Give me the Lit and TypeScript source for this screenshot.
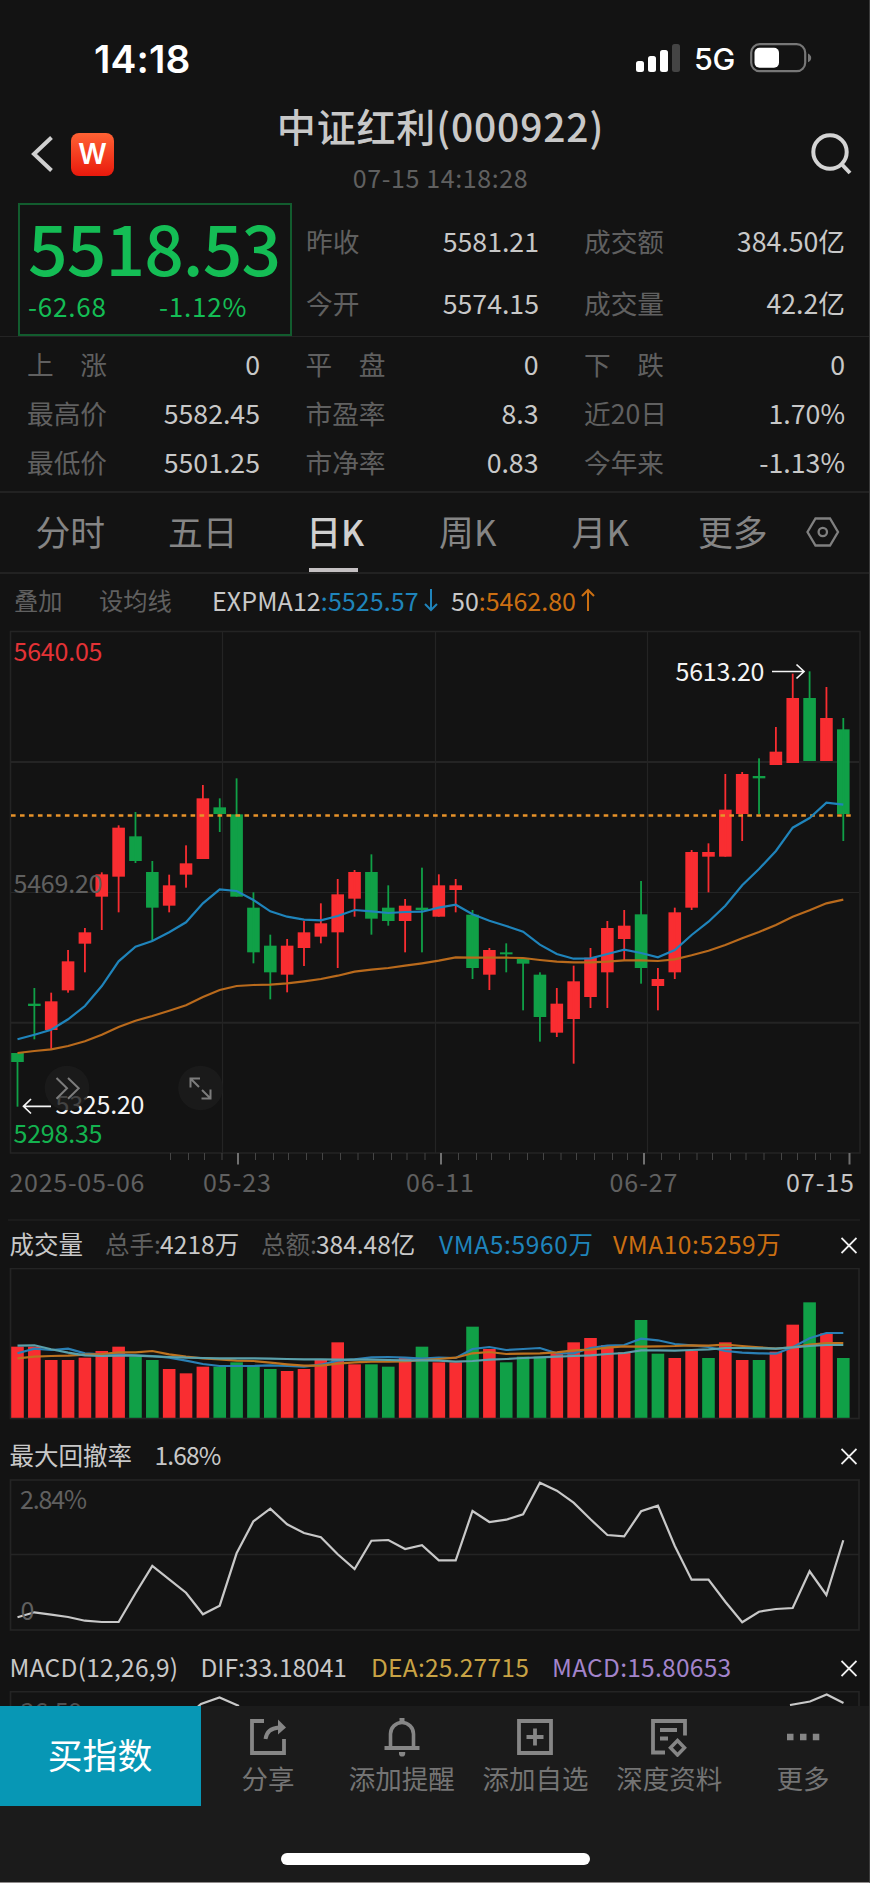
import { LitElement, html, svg, css } from "lit";
import { customElement, property } from "lit/decorators.js";

type Candle = [number, number, number, number, number];

// [body top, body bottom, wick top, wick bottom, rising] in thirds of a pixel below the plot origin
const CANDLES: Candle[] = [
  [1299, 1326, 1299, 1460, 0], [1151, 1158, 1104, 1258, 0], [1144, 1230, 1118, 1287, 1],
  [1024, 1111, 990, 1118, 1], [937, 971, 924, 1057, 1], [763, 830, 757, 930, 1],
  [623, 770, 616, 877, 1], [649, 723, 576, 729, 0], [756, 863, 723, 963, 0],
  [796, 857, 764, 877, 1], [730, 764, 676, 803, 1], [535, 717, 495, 717, 1],
  [562, 582, 535, 636, 0], [583, 830, 475, 830, 0], [863, 997, 817, 1030, 0],
  [977, 1057, 944, 1138, 0], [977, 1064, 957, 1117, 1], [937, 984, 903, 1038, 1],
  [910, 950, 850, 970, 1], [823, 937, 777, 1044, 1], [756, 836, 750, 890, 1],
  [756, 896, 703, 944, 0], [863, 903, 796, 917, 0], [857, 903, 837, 997, 1],
  [863, 870, 743, 997, 0], [796, 890, 763, 890, 1], [796, 810, 777, 877, 1],
  [884, 1044, 870, 1077, 0], [990, 1064, 984, 1110, 1], [997, 1003, 970, 1057, 0],
  [1017, 1031, 1017, 1171, 0], [1064, 1191, 1057, 1265, 0], [1151, 1238, 1104, 1251, 1],
  [1084, 1197, 1037, 1331, 1], [1013, 1131, 984, 1164, 1], [924, 1057, 903, 1164, 1],
  [917, 957, 870, 1020, 1], [883, 1044, 783, 1091, 0], [1077, 1098, 1044, 1171, 1],
  [877, 1057, 863, 1077, 1], [696, 863, 690, 870, 1], [696, 710, 670, 817, 1],
  [569, 710, 462, 710, 1], [462, 582, 456, 663, 1], [468, 475, 415, 582, 0],
  [395, 435, 321, 435, 1], [234, 429, 161, 429, 1], [234, 423, 154, 423, 0],
  [294, 423, 201, 423, 1], [328, 582, 294, 663, 0],
];
const EMA12 = [1258, 1244, 1229, 1198, 1158, 1098, 1024, 980, 963, 937, 907, 850, 808, 813, 840, 874, 890, 899, 901, 888, 870, 874, 879, 876, 875, 863, 854, 883, 902, 918, 935, 974, 1002, 1016, 1015, 1002, 989, 999, 1012, 990, 945, 905, 857, 796, 747, 693, 623, 594, 548, 554];
const EMA50 = [1299, 1293, 1288, 1278, 1264, 1244, 1221, 1202, 1188, 1172, 1156, 1131, 1110, 1098, 1095, 1094, 1090, 1084, 1077, 1067, 1055, 1049, 1044, 1037, 1030, 1022, 1012, 1013, 1013, 1013, 1014, 1020, 1025, 1027, 1027, 1025, 1021, 1021, 1023, 1018, 1006, 992, 975, 955, 936, 915, 890, 871, 850, 839];
const VOLUME = [410, 410, 450, 450, 443, 423, 410, 440, 450, 477, 490, 470, 470, 457, 467, 477, 483, 477, 450, 397, 463, 463, 470, 443, 410, 457, 457, 350, 417, 457, 440, 440, 430, 397, 384, 405, 427, 330, 431, 444, 423, 444, 397, 450, 450, 425, 344, 277, 370, 444];
const VOLUME_DOWN = new Set([7, 8, 12, 13, 14, 15, 21, 22, 24, 27, 29, 30, 31, 37, 38, 41, 44, 47, 49]);
const VMA5 = [430, 416, 420, 416, 430, 433, 433, 436, 438, 443, 452, 462, 468, 468, 468, 466, 468, 470, 464, 452, 448, 442, 441, 443, 446, 443, 444, 417, 411, 420, 417, 414, 430, 430, 414, 407, 405, 386, 391, 402, 406, 411, 423, 428, 430, 431, 412, 385, 369, 369];
const VMA10 = [445, 440, 438, 437, 434, 432, 427, 427, 423, 433, 440, 445, 448, 452, 453, 458, 463, 467, 467, 461, 457, 455, 455, 454, 450, 447, 443, 430, 426, 432, 431, 430, 427, 421, 419, 413, 409, 410, 409, 408, 406, 407, 404, 408, 412, 416, 412, 404, 399, 399];
const VMA20 = [407, 406, 418, 428, 436, 438, 437, 437, 439, 441, 443, 444, 445, 445, 445, 446, 447, 448, 448, 449, 449, 449, 450, 451, 451, 452, 455, 453, 449, 447, 444, 442, 440, 438, 436, 432, 429, 421, 421, 422, 420, 418, 414, 414, 415, 416, 412, 408, 405, 405];
const DRAWDOWN = [562, 547, 554, 561, 572, 576, 576, 490, 408, 448, 488, 553, 527, 370, 274, 236, 283, 309, 322, 373, 417, 332, 330, 357, 346, 391, 391, 243, 276, 269, 253, 158, 182, 218, 268, 315, 319, 244, 227, 348, 449, 449, 515, 577, 545, 537, 534, 424, 495, 331];
const TICKS = [170.5, 188.5, 204.5, 222, 255.5, 273.5, 288.5, 306.5, 322.5, 340.5, 358, 373.5, 391.5, 407, 425, 458.5, 476.5, 491.5, 509.5, 527.5, 543.5, 561, 576.5, 594.5, 612.5, 627.5, 661.5, 679.5, 697, 712.5, 730.5, 746, 764, 781.5, 797.5, 815.5, 830.5];
const BIG_TICKS = [238, 441, 644, 849.5];

const RED = "#f92d31";
const GREEN = "#10a047";
const GRID = "#242424";
const at = (i: number) => 17.5 + i * 16.853;
const line = (values: number[], top: number) =>
  values.map((v, i) => `${at(i).toFixed(1)},${(top + v / 3).toFixed(1)}`).join(" ");

const FONT = css`
  :host {
    display: block;
    font-family: "Noto Sans CJK SC", "Noto Sans", sans-serif;
  }
  svg { display: block; }
  text { font-family: "Noto Sans CJK SC", "Noto Sans", sans-serif; font-size: 25px; }
`;

@customElement("status-bar")
class StatusBar extends LitElement {
  static styles = [FONT, css`
    .bar { height: 100px; padding: 16px 57px 0 94px; box-sizing: border-box; display: flex; align-items: center; color: #fff; font-family: Inter, sans-serif; }
    .time { font-size: 38.800px; font-weight: 600; letter-spacing: 0.1px; flex: 1; }
    .net { font-size: 30.500px; font-weight: 500; width: 43px; margin: 0 13px 0 13px; letter-spacing: -0.3px; }
  `];
  render() {
    return html`<div class="bar">
      <span class="time">14:18</span>
      <svg width="45" height="28" viewBox="0 0 45 28" fill="#fff">
        <rect x="0" y="17" width="8" height="11" rx="2.5" /><rect x="12" y="12" width="8" height="16" rx="2.5" />
        <rect x="24" y="6" width="8" height="22" rx="2.5" /><rect x="36" y="0" width="8" height="28" rx="2.5" fill="#444" />
      </svg>
      <span class="net">5G</span>
      <svg width="62" height="30" viewBox="0 0 62 30">
        <rect x="1.2" y="1.2" width="54" height="27" rx="8.5" fill="none" stroke="#777" stroke-width="2.2" />
        <rect x="4.5" y="4.8" width="24.5" height="20" rx="5" fill="#fff" />
        <path d="M58 10.500c2 1 3.200 2.600 3.200 4.400s-1.200 3.400-3.200 4.400z" fill="#777" />
      </svg>
    </div>`;
  }
}

@customElement("page-header")
class PageHeader extends LitElement {
  static styles = [FONT, css`
    .head { height: 103px; display: grid; grid-template-columns: 124px 1fr 112px; align-items: center; }
    .left { display: flex; align-items: center; gap: 16px; padding: 5px 0 0 31px; }
    .logo { width: 43px; height: 43px; border-radius: 8px; background: linear-gradient(#ff6234, #e9190c); display: flex; align-items: center; justify-content: center; color: #fff; font: 600 28px/1 Inter, sans-serif; }
    .center { text-align: center; padding-bottom: 11px; white-space: nowrap; }
    .title { font-size: 39px; line-height: 48px; font-weight: 500; color: #c8c8c8; letter-spacing: 0.85px; }
    .date { font-size: 25px; line-height: 30px; margin-top: 13px; color: #606060; letter-spacing: 0.6px; }
    .right { padding: 5px 0 0 52px; }
  `];
  render() {
    return html`<div class="head">
      <div class="left">
        <svg width="24" height="38" viewBox="0 0 24 38"><path d="M20.500 2.500L3 19l17.500 16.500" fill="none" stroke="#d0d0d0" stroke-width="4" /></svg>
        <div class="logo">W</div>
      </div>
      <div class="center"><div class="title">中证红利(000922)</div><div class="date">07-15 14:18:28</div></div>
      <div class="right"><svg width="44" height="44" viewBox="0 0 44 44" fill="none" stroke="#d4d4d4" stroke-width="4"><circle cx="21" cy="20" r="16.700" /><path d="M32.500 32l8.500 9" /></svg></div>
    </div>`;
  }
}

@customElement("quote-panel")
class QuotePanel extends LitElement {
  static styles = [FONT, css`
    .top { height: 134px; box-sizing: border-box; display: grid; grid-template-columns: 292px 1fr; border-bottom: 1px solid #242424; }
    .box { margin-left: 18px; border: 2px solid #125c2e; box-sizing: border-box; color: #14bd55; height: 133px; }
    .price { font-size: 69.500px; line-height: 70px; font-weight: 500; padding: 6px 0 0 8px; letter-spacing: -0.9px; white-space: nowrap; }
    .delta { display: flex; font-size: 26px; line-height: 30px; padding: 10px 0 0 8px; letter-spacing: 0.8px; }
    .delta span { width: 141px; white-space: nowrap; }
    .cells { display: grid; grid-template-columns: 233px 261px; column-gap: 45px; padding-left: 14px; }
    .upper { padding-top: 7px; grid-auto-rows: 62px; }
    .lower { grid-template-columns: 233px 233px 261px; column-gap: 45.500px; padding: 2px 0 5px 27px; grid-auto-rows: 49px; border-bottom: 2px solid #222; }
    .cell { display: flex; justify-content: space-between; align-items: center; font-size: 26.700px; line-height: 30px; white-space: pre; }
    .name { color: #606060; }
    .value { color: #c8c8c8; }
  `];
  cell = ([name, value]: string[]) => html`<div class="cell"><span class="name">${name}</span><span class="value">${value}</span></div>`;
  render() {
    return html`
      <div class="top">
        <div class="box"><div class="price">5518.53</div><div class="delta"><span>-62.68</span><span>-1.12%</span></div></div>
        <div class="cells upper">
          ${[["昨收", "5581.21"], ["成交额", "384.50亿"], ["今开", "5574.15"], ["成交量", "42.2亿"]].map(this.cell)}
        </div>
      </div>
      <div class="cells lower">
        ${[["上　涨", "0"], ["平　盘", "0"], ["下　跌", "0"], ["最高价", "5582.45"], ["市盈率", "8.3"], ["近20日", "1.70%"], ["最低价", "5501.25"], ["市净率", "0.83"], ["今年来", "-1.13%"]].map(this.cell)}
      </div>`;
  }
}

@customElement("period-tabs")
class PeriodTabs extends LitElement {
  static styles = [FONT, css`
    .tabs { height: 79px; display: flex; padding-left: 4px; border-bottom: 2px solid #222; }
    .tab { width: 132.500px; display: flex; flex-direction: column; align-items: center; justify-content: space-between; font-size: 34.800px; line-height: 77px; color: #858585; height: 79px; }
    .active { color: #d0d0d0; font-weight: 500; }
    .mark { width: 49px; height: 4px; background: #c4c0c2; margin: -3px 3px 0 0; }
    .gear { padding: 23px 0 0 7px; }
  `];
  render() {
    return html`<div class="tabs">
      ${["分时", "五日", "日K", "周K", "月K", "更多"].map((t) =>
        t === "日K" ? html`<div class="tab active">${t}<div class="mark"></div></div>` : html`<div class="tab">${t}</div>`)}
      <svg class="gear" width="34" height="32" viewBox="0 0 34 32" fill="none" stroke="#808080" stroke-width="2.300"><path d="M9.500 2.500h14.500l8 13.500l-8 13.500h-14.500l-8-13.500z" /><circle cx="16.800" cy="16" r="4.200" /></svg>
    </div>`;
  }
}

@customElement("overlay-row")
class OverlayRow extends LitElement {
  static styles = [FONT, css`
    .row { height: 56px; box-sizing: border-box; display: flex; align-items: center; padding: 0 0 5px 14px; font-size: 25px; line-height: 30px; color: #606060; white-space: nowrap; }
    .add { width: 85px; font-size: 24.300px; }
    .set { width: 113px; font-size: 24.300px; }
    .white { color: #c8c8c8; }
    .ema { width: 211px; letter-spacing: 0.100px; }
    .blue { color: #1f84bb; }
    .orange { color: #cb6f12; }
    .up { margin-left: 4px; }
    .arrow { margin-right: 12px; }
  `];
  render() {
    return html`<div class="row">
      <span class="add">叠加</span><span class="set">设均线</span>
      <span class="white ema">EXPMA12<span class="blue">:5525.57</span></span>
      <svg class="arrow" width="16" height="24" viewBox="0 0 16 24" fill="none" stroke="#1f84bb" stroke-width="2"><path d="M8 1v21M2 16l6 6 6-6" /></svg>
      <span class="white">50<span class="orange">:5462.80</span></span>
      <svg class="up" width="16" height="24" viewBox="0 0 16 24" fill="none" stroke="#cb6f12" stroke-width="2"><path d="M8 23V2M2 8l6-6 6 6" /></svg>
    </div>`;
  }
}

@customElement("candle-chart")
class CandleChart extends LitElement {
  static styles = [FONT, css`
    .tip { fill: #f4f4f4; }
    .high { fill: #e43236; }
    .low { fill: #14b24f; }
    .dim { fill: #606060; }
    .last { fill: #c6c6c6; }
  `];
  render() {
    const label = (x: number, y: number, w: number, cls: string, t: string) =>
      svg`<text class=${cls} x=${x} y=${y} textLength=${w}>${t}</text>`;
    return html`<svg width="869" height="591" viewBox="0 630 869 591">
      <g stroke=${GRID} fill="none">
        <rect x="10.500" y="631.500" width="849.500" height="521.500" stroke-width="1.500" />
        <path d="M11 762H859M11 1022.700H859" stroke-width="2" />
        <path d="M11 892.500H859M222.500 632V1153M435.500 632V1153M647.500 632V1153" stroke-width="1.200" />
        <path d="M8 1220H860" stroke-width="1" />
      </g>
      <path d=${TICKS.map((x) => `M${x} 1153v7`).join("")} stroke="#454545" stroke-width="1" />
      <path d=${BIG_TICKS.map((x) => `M${x} 1153v11.500`).join("")} stroke="#707070" stroke-width="2" />
      ${CANDLES.map(([bt, bb, wt, wb, up], i) => svg`
        <g fill=${up ? RED : GREEN}>
          <rect x=${at(i) - 6.3} y=${620 + bt / 3} width="12.600" height=${(bb - bt) / 3} />
          <rect x=${at(i) - 0.9} y=${620 + wt / 3} width="1.800" height=${(wb - wt) / 3} />
        </g>`)}
      <path d="M11 815.500H855" stroke="#e8932a" stroke-width="2.300" stroke-dasharray="4.600 4.380" />
      <polyline points=${line(EMA50, 620)} fill="none" stroke="#b96a1c" stroke-width="2.200" />
      <polyline points=${line(EMA12, 620)} fill="none" stroke="#1f84bb" stroke-width="2.200" />
      ${label(13.5, 660.5, 89, "high", "5640.05")}
      ${label(13.5, 893.2, 89, "dim", "5469.20")}
      ${label(675.5, 680.7, 89, "tip", "5613.20")}
      <path d="M772 671.500H804M796.500 664.500L804 671.500L796.500 678.500" fill="none" stroke="#f4f4f4" stroke-width="1.700" />
      ${label(55.5, 1113.7, 89, "tip", "5325.20")}
      <path d="M51 1106.300H23.500M31 1099L23.500 1106.300L31 1113.500" fill="none" stroke="#f4f4f4" stroke-width="1.700" />
      ${label(13.5, 1142.5, 89, "low", "5298.35")}
      <g fill="#1c1c1c" fill-opacity="0.820"><circle cx="67" cy="1088" r="22.300" /><circle cx="200.500" cy="1088" r="22.300" /></g>
      <g fill="none" stroke="#7c7c7c" stroke-width="2">
        <path d="M56.500 1078L67 1088.300L56.500 1098.700M68 1078L78.700 1088.300L68 1098.700" />
        <path d="M200 1078.500H190.500V1087.500M190.500 1078.500L199 1087M201.500 1098.500H210.500V1089.500M210.500 1098.500L202 1090" />
      </g>
      ${label(9.5, 1191.7, 135, "dim", "2025-05-06")}
      ${label(203, 1191.7, 68, "dim", "05-23")}
      ${label(406, 1191.7, 68, "dim", "06-11")}
      ${label(609.5, 1191.7, 68, "dim", "06-27")}
      ${label(786, 1191.7, 68, "last", "07-15")}
    </svg>`;
  }
}

@customElement("indicator-head")
class IndicatorHead extends LitElement {
  @property({ type: Array }) parts: { w: number; color: string; text: string; s?: number }[] = [];
  static styles = [FONT, css`
    .row { display: flex; height: 47px; box-sizing: border-box; align-items: center; padding: 0 12px 2px 9.500px; font-size: 24.500px; line-height: 30px; white-space: nowrap; }
    .close { margin: 3px 0 0 auto; }
    .white { color: #c8c8c8; }
    .dim { color: #606060; }
    .blue { color: #1f84bb; }
    .orange { color: #cb6f12; }
    .gold { color: #c9a345; }
    .violet { color: #a384cb; }
  `];
  render() {
    return html`<div class="row">
      ${this.parts.map((p) => html`<span class=${p.color} style="width:${p.w}px;letter-spacing:${p.s ?? 0}px">${p.text}</span>`)}
      <svg class="close" width="16" height="17" viewBox="0 0 16 17" stroke="#f0f0f0" stroke-width="1.800"><path d="M.5 1L15.500 16M15.500 1L.5 16" /></svg>
    </div>`;
  }
}

@customElement("volume-chart")
class VolumeChart extends LitElement {
  static styles = FONT;
  render() {
    return html`<svg width="869" height="164" viewBox="0 1268 869 164">
      <rect x="10.500" y="1268.500" width="848.500" height="150" fill="none" stroke=${GRID} stroke-width="1.700" />
      ${VOLUME.map((v, i) => svg`<rect x=${at(i) - 6.3} y=${1210 + v / 3} width="12.600" height=${1417.8 - 1210 - v / 3} fill=${VOLUME_DOWN.has(i) ? GREEN : RED} />`)}
      <g fill="none" stroke-width="2.200">
        <polyline points=${line(VMA5, 1210)} stroke="#2a7fb4" />
        <polyline points=${line(VMA10, 1210)} stroke="#bd721f" />
        <polyline points=${line(VMA20, 1210)} stroke="#5ba0ab" />
      </g>
    </svg>`;
  }
}

@customElement("drawdown-chart")
class DrawdownChart extends LitElement {
  static styles = [FONT, css`.dim { fill: #606060; }`];
  render() {
    return html`<svg width="869" height="165" viewBox="0 1479 869 165">
      <rect x="10.500" y="1480" width="848.500" height="150" fill="none" stroke=${GRID} stroke-width="1.700" />
      <path d="M11 1554.500H859" stroke=${GRID} stroke-width="1.500" />
      <polyline points=${line(DRAWDOWN, 1430)} fill="none" stroke="#c8c8c8" stroke-width="2.200" />
      <text class="dim" x="20" y="1508.700" textLength="67">2.84%</text>
      <text class="dim" x="20.500" y="1619.500">0</text>
    </svg>`;
  }
}

@customElement("macd-chart")
class MacdChart extends LitElement {
  static styles = [FONT, css`.dim { fill: #505050; }`];
  render() {
    return html`<svg width="869" height="15" viewBox="0 1691 869 15">
      <path d="M10.500 1706V1691.700H859V1706" fill="none" stroke=${GRID} stroke-width="1.700" />
      <path d="M198 1706.500L201 1704L219.500 1697.500L239 1706M790 1705L810 1701.500L826.700 1694.500L843.500 1703" fill="none" stroke="#c8c8c8" stroke-width="2.200" />
      <text class="dim" x="20.500" y="1720.500" textLength="62">36.59</text>
    </svg>`;
  }
}

@customElement("bottom-bar")
class BottomBar extends LitElement {
  static styles = [FONT, css`
    .bar { height: 176px; background: #1b1b1b; }
    .row { display: grid; grid-template-columns: 201px repeat(5, 133.800px); height: 100px; }
    .buy { background: #0797b5; color: #fff; font-size: 34.800px; line-height: 40px; padding: 0 1px 5px 0; display: flex; align-items: center; justify-content: center; }
    .item { display: flex; flex-direction: column; align-items: center; padding-top: 11px; font-size: 26.500px; line-height: 30px; color: #747474; gap: 6px; white-space: nowrap; }
    .home { width: 309px; height: 12px; border-radius: 6px; background: #fff; margin: 47px 0 0 281px; }
  `];
  render() {
    const icon = (body: unknown) => html`<svg width="40" height="40" viewBox="0 0 40 40" fill="none" stroke="#868686" stroke-width="3.800">${body}</svg>`;
    return html`<div class="bar">
      <div class="row">
        <div class="buy">买指数</div>
        <div class="item">${icon(svg`<path d="M16 4H4v32h32V22" /><path d="M17.500 22C18.500 14.500 24 11 31 10.500" /><path d="M30 2.500L38 10.500L30 17.500z" fill="#868686" stroke="none" />`)}<span>分享</span></div>
        <div class="item">${icon(svg`<path d="M2.500 31H37.500" /><path d="M8.500 31V17a11.500 11.500 0 0 1 23 0v14" stroke-width="3.600" /><path d="M20 1v5" stroke-width="5" /><path d="M17 35h6.200v1.500a3.100 3.100 0 0 1-6.200 0z" fill="#868686" stroke="none" />`)}<span>添加提醒</span></div>
        <div class="item">${icon(svg`<path d="M4 4h32v32H4zM20 11.500v17M11.500 20h17" />`)}<span>添加自选</span></div>
        <div class="item">${icon(svg`<path d="M16 35.500H4V4H36V18.500M11 13H28M11 21.500H19" /><path d="M28.500 23.500L35.500 30.800L28.500 38L21.500 30.800z" stroke-width="3.500" />`)}<span>深度资料</span></div>
        <div class="item">${icon(svg`<path d="M4 20h6.500M17 20h6.500M29.800 20h6.500" stroke-width="6.500" />`)}<span>更多</span></div>
      </div>
      <div class="home"></div>
    </div>`;
  }
}

@customElement("app-root")
class AppRoot extends LitElement {
  static styles = css`
    :host { display: block; }
    .screen { width: 870px; height: 1883px; box-sizing: border-box; background: #131313; border-right: 1px solid #3c3c3c; border-bottom: 1px solid #8f8b8b; overflow: hidden; display: flex; flex-direction: column; }
    .screen > * { flex: none; }
  `;
  render() {
    return html`<div class="screen">
      <status-bar></status-bar>
      <page-header></page-header>
      <quote-panel></quote-panel>
      <period-tabs></period-tabs>
      <overlay-row></overlay-row>
      <candle-chart></candle-chart>
      <indicator-head .parts=${[
        { w: 95.5, color: "white", text: "成交量" }, { w: 55, color: "dim", text: "总手:" }, { w: 101, color: "white", text: "4218万", s: 0.1 },
        { w: 55, color: "dim", text: "总额:" }, { w: 123, color: "white", text: "384.48亿" },
        { w: 174, color: "blue", text: "VMA5:5960万", s: 0.65 }, { w: 180, color: "orange", text: "VMA10:5259万", s: 0.6 }]}></indicator-head>
      <volume-chart></volume-chart>
      <indicator-head .parts=${[{ w: 145, color: "white", text: "最大回撤率" }, { w: 100, color: "white", text: "1.68%", s: -0.85 }]}></indicator-head>
      <drawdown-chart></drawdown-chart>
      <indicator-head .parts=${[
        { w: 191, color: "white", text: "MACD(12,26,9)", s: 0.28 }, { w: 170.5, color: "white", text: "DIF:33.18041" },
        { w: 181, color: "gold", text: "DEA:25.27715", s: 0.25 }, { w: 190, color: "violet", text: "MACD:15.80653", s: 0.28 }]}></indicator-head>
      <macd-chart></macd-chart>
      <bottom-bar></bottom-bar>
    </div>`;
  }
}
